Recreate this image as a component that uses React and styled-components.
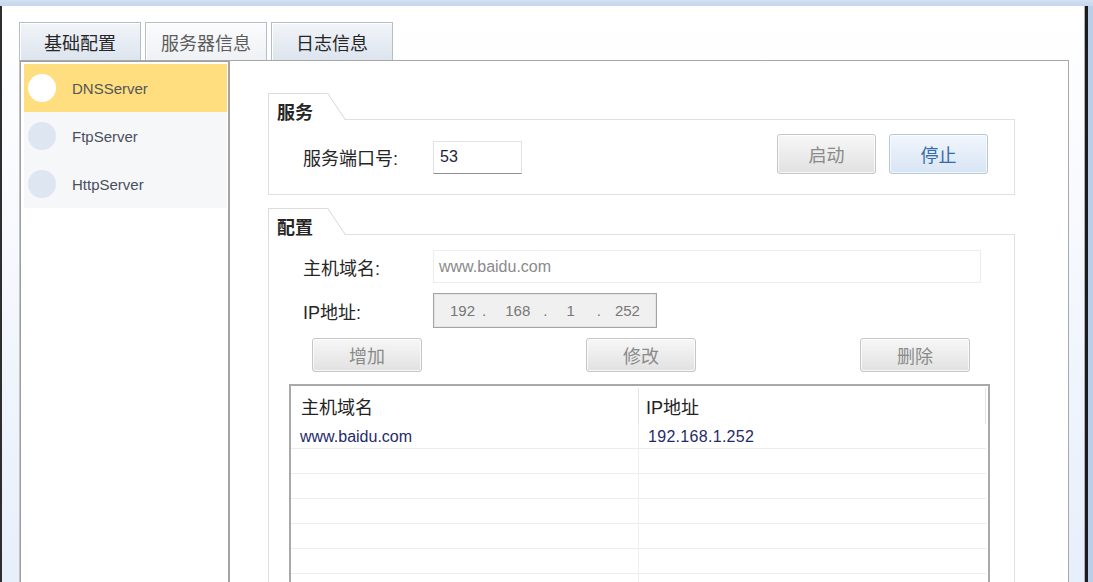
import React from 'react'
import styled, { createGlobalStyle } from 'styled-components'

const GlobalStyle = createGlobalStyle`
    html, body {
        margin: 0;
        padding: 0;
    }
    body {
        background: #bcd1ea;
        font-family: "Liberation Sans", "Noto Sans CJK SC", sans-serif;
        overflow: hidden;
    }
`

const servers = [
    { name: 'DNSServer', active: true },
    { name: 'FtpServer' },
    { name: 'HttpServer' },
]

const ipParts = [
    { text: '192', gap: 16 },
    { text: '.', gap: 7 },
    { text: '168', gap: 19 },
    { text: '.', gap: 13 },
    { text: '1', gap: 19 },
    { text: '.', gap: 22 },
    { text: '252', gap: 14 },
]

const rows = [
    { host: 'www.baidu.com', ip: '192.168.1.252' },
    {}, {}, {}, {}, {}, {},
]

function App() {
    return (
        <Screen>
            <GlobalStyle />
            <TitleStrip />
            <WindowRow>
                <Frame>
                    <TabBar>
                        <Tab>基础配置</Tab>
                        <Tab $active>服务器信息</Tab>
                        <Tab>日志信息</Tab>
                    </TabBar>
                    <Panel>
                        <ServerList>
                            {servers.map((s) => (
                                <ServerItem key={s.name} $active={s.active}>
                                    <Dot $active={s.active} />
                                    <span>{s.name}</span>
                                </ServerItem>
                            ))}
                        </ServerList>
                        <Main>
                            <Group>
                                <GroupHead>
                                    <GroupTab>服务</GroupTab>
                                    <GroupFill />
                                </GroupHead>
                                <ServiceBody>
                                    <Label>服务端口号:</Label>
                                    <PortInput>53</PortInput>
                                    <Spacer />
                                    <ActionButtons>
                                        <Button>启动</Button>
                                        <Button $blue>停止</Button>
                                    </ActionButtons>
                                </ServiceBody>
                            </Group>
                            <Group $grow $top={13}>
                                <GroupHead>
                                    <GroupTab>配置</GroupTab>
                                    <GroupFill />
                                </GroupHead>
                                <ConfigBody>
                                    <FieldRow>
                                        <Label>主机域名:</Label>
                                        <TextInput>www.baidu.com</TextInput>
                                    </FieldRow>
                                    <FieldRow $top={10}>
                                        <Label>IP地址:</Label>
                                        <IpBox>
                                            {ipParts.map((p, i) => (
                                                <IpPart key={i} $gap={p.gap}>{p.text}</IpPart>
                                            ))}
                                        </IpBox>
                                    </FieldRow>
                                    <ButtonRow>
                                        <SmallButton>增加</SmallButton>
                                        <SmallButton>修改</SmallButton>
                                        <SmallButton>删除</SmallButton>
                                    </ButtonRow>
                                    <Table>
                                        <HeadRow>
                                            <HeadCell>主机域名</HeadCell>
                                            <HeadCell $last>IP地址</HeadCell>
                                        </HeadRow>
                                        {rows.map((r, i) => (
                                            <DataRow key={i}>
                                                <DataCell>{r.host}</DataCell>
                                                <DataCell $last>{r.ip}</DataCell>
                                            </DataRow>
                                        ))}
                                    </Table>
                                </ConfigBody>
                            </Group>
                        </Main>
                    </Panel>
                </Frame>
                <OuterEdge />
            </WindowRow>
        </Screen>
    )
}

export default App

const Screen = styled.div`
    width: 1093px;
    height: 582px;
    display: flex;
    flex-direction: column;
    overflow: hidden;
`
const TitleStrip = styled.div`
    flex: none;
    height: 6px;
    background: linear-gradient(#d2e1f2, #c4d7ed);
`
const WindowRow = styled.div`
    flex: 1;
    min-height: 0;
    display: flex;
`
const Frame = styled.div`
    width: 1088px;
    box-sizing: border-box;
    border-left: 2px solid #2e2e2e;
    border-right: 3px solid #1c1c1c;
    box-shadow: inset -1px 0 0 #a9b2bd;
    background: linear-gradient(#ffffff 0%, #fbfcfe 20%, #e7effb 100%);
    padding: 16px 16px 0 17px;
    display: flex;
    flex-direction: column;
`
const OuterEdge = styled.div`
    flex: 1;
    background: #b9cee8;
`
const TabBar = styled.div`
    display: flex;
    gap: 4px;
    height: 38px;
    flex: none;
`
const Tab = styled.div`
    width: 122px;
    height: 38px;
    box-sizing: border-box;
    border: 1px solid #b4bdc8;
    border-bottom: none;
    box-shadow: inset 1px 1px 0 #ffffff;
    background: ${(p) => (p.$active
        ? 'linear-gradient(#fcfcfd, #eef1f5)'
        : 'linear-gradient(#f2f5f9, #dce4ee)')};
    color: ${(p) => (p.$active ? '#5c5c5c' : '#262626')};
    font-family: "Noto Sans CJK SC", sans-serif;
    font-size: 18px;
    display: flex;
    align-items: center;
    justify-content: center;
`
const Panel = styled.div`
    flex: 1;
    min-height: 0;
    width: 1050px;
    box-sizing: border-box;
    border: 1px solid #a8a8a8;
    border-left-color: #c2c2c2;
    border-bottom: none;
    background: #ffffff;
    display: flex;
`
const ServerList = styled.div`
    width: 210px;
    flex: none;
    box-sizing: border-box;
    border: 1px solid #9e9e9e;
    border-right: 2px solid #a3a3a3;
    border-bottom: none;
    padding: 2px 1px 0 3px;
`
const ServerItem = styled.div`
    height: 48px;
    display: flex;
    align-items: center;
    gap: 16px;
    padding-left: 4px;
    background: ${(p) => (p.$active ? '#ffde80' : '#f6f7f9')};
    color: ${(p) => (p.$active ? '#555555' : '#4a4f5c')};
    font-size: 15px;
`
const Dot = styled.div`
    width: 28px;
    height: 28px;
    border-radius: 50%;
    background: ${(p) => (p.$active ? '#ffffff' : '#dde6f1')};
`
const Main = styled.div`
    flex: 1;
    min-width: 0;
    padding: 32px 53px 0 38px;
    display: flex;
    flex-direction: column;
    overflow: hidden;
`
const Group = styled.div`
    display: flex;
    flex-direction: column;
    flex: ${(p) => (p.$grow ? 1 : 'none')};
    margin-top: ${(p) => p.$top || 0}px;
`
const GroupHead = styled.div`
    display: flex;
    height: 27px;
`
const GroupTab = styled.div`
    position: relative;
    width: 59px;
    box-sizing: border-box;
    border-left: 1px solid #dcdcdc;
    border-top: 1px solid #dcdcdc;
    padding-left: 8px;
    font-family: "Noto Sans CJK SC", sans-serif;
    font-weight: 700;
    font-size: 18px;
    line-height: 1;
    color: #262626;
    display: flex;
    align-items: flex-end;
    &::after {
        content: '';
        position: absolute;
        top: -1px;
        left: 58px;
        width: 0;
        height: 27px;
        border-left: 1px solid #d6d6d6;
        transform-origin: top left;
        transform: skewX(33.7deg);
    }
`
const GroupFill = styled.div`
    flex: 1;
    margin-left: 18px;
    border-bottom: 1px solid #e0e0e0;
`
const ServiceBody = styled.div`
    height: 75px;
    box-sizing: border-box;
    border: 1px solid #e0e0e0;
    border-top: none;
    padding: 0 26px 0 34px;
    display: flex;
    align-items: center;
`
const Label = styled.div`
    width: 130px;
    flex: none;
    font-size: 18px;
    color: #262626;
`
const PortInput = styled.div`
    width: 89px;
    height: 33px;
    box-sizing: border-box;
    border: 1px solid #e2e2e2;
    border-bottom-color: #8f8f8f;
    padding-left: 6px;
    font-size: 16px;
    color: #1e1e3c;
    display: flex;
    align-items: center;
`
const Spacer = styled.div`
    flex: 1;
`
const ActionButtons = styled.div`
    display: flex;
    gap: 13px;
    margin-bottom: 7px;
`
const Button = styled.div`
    width: 99px;
    height: 40px;
    box-sizing: border-box;
    border: 1px solid ${(p) => (p.$blue ? '#b8c7d8' : '#c6c6c6')};
    border-radius: 3px;
    background: ${(p) => (p.$blue
        ? 'linear-gradient(#f1f6fc, #d7e5f4)'
        : 'linear-gradient(#f7f7f7, #e1e1e1)')};
    box-shadow: inset 0 0 0 1px rgba(255, 255, 255, 0.7);
    color: ${(p) => (p.$blue ? '#356aa6' : '#8a8a8a')};
    font-family: "Noto Sans CJK SC", sans-serif;
    font-size: 18px;
    display: flex;
    align-items: center;
    justify-content: center;
`
const ConfigBody = styled.div`
    flex: 1;
    border: 1px solid #e0e0e0;
    border-top: none;
    border-bottom: none;
    padding: 15px 24px 0 20px;
    display: flex;
    flex-direction: column;
`
const FieldRow = styled.div`
    display: flex;
    align-items: center;
    padding: 0 9px 0 14px;
    margin-top: ${(p) => p.$top || 0}px;
`
const TextInput = styled.div`
    flex: 1;
    height: 33px;
    box-sizing: border-box;
    border: 1px solid #ececec;
    padding-left: 5px;
    font-size: 16px;
    color: #8a8a8a;
    display: flex;
    align-items: center;
`
const IpBox = styled.div`
    width: 224px;
    height: 35px;
    box-sizing: border-box;
    border: 1px solid #a4a4a4;
    box-shadow: inset 0 0 0 1px #e4e4e4;
    background: #f0f0f0;
    display: flex;
    align-items: center;
    font-size: 15px;
    color: #777777;
`
const IpPart = styled.span`
    margin-left: ${(p) => p.$gap}px;
`
const ButtonRow = styled.div`
    display: flex;
    justify-content: space-between;
    padding: 0 20px 0 23px;
    margin-top: 10px;
`
const SmallButton = styled(Button)`
    width: 110px;
    height: 34px;
`
const Table = styled.div`
    flex: 1;
    margin-top: 12px;
    border: 2px solid #a9a9a9;
    border-bottom: none;
`
const HeadRow = styled.div`
    display: grid;
    grid-template-columns: 348px 1fr;
    height: 38px;
    padding-top: 2px;
    box-sizing: border-box;
`
const HeadCell = styled.div`
    padding-left: ${(p) => (p.$last ? 7 : 10)}px;
    border-right: 1px solid #e4e4e4;
    margin-right: ${(p) => (p.$last ? 2 : 0)}px;
    font-size: 18px;
    color: #222222;
    display: flex;
    align-items: center;
`
const DataRow = styled.div`
    display: grid;
    grid-template-columns: 348px 1fr;
    height: 25px;
    box-sizing: border-box;
    border-bottom: 1px solid #ededed;
    margin-right: 2px;
`
const DataCell = styled.div`
    padding-left: 9px;
    padding-top: 2px;
    border-right: ${(p) => (p.$last ? 'none' : '1px solid #efefef')};
    font-size: 16px;
    letter-spacing: ${(p) => (p.$last ? 0.3 : 0)}px;
    color: #1f2b6a;
    display: flex;
    align-items: center;
`
